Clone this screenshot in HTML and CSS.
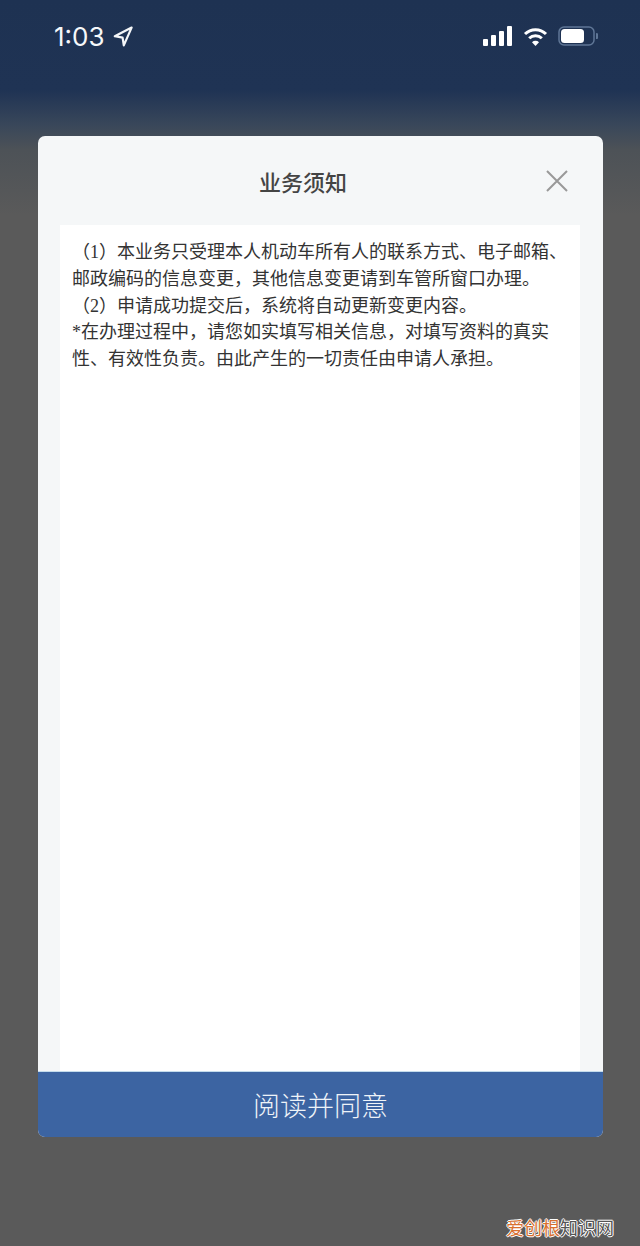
FILE: index.html
```html
<!DOCTYPE html>
<html lang="zh-CN">
<head>
    <meta charset="UTF-8">
    <meta name="viewport" content="width=device-width, initial-scale=1.0">
    <title>业务须知</title>
    <link rel="stylesheet" href="styles.css">
</head>
<body>
    <div class="status-bar">
        <div class="status-left">
            <span class="time">1:03</span>
            <svg class="location" viewBox="0 0 20 21" width="20" height="21">
                <path d="M18.6 1.6 1.8 10.2 9.6 11.6 10.8 19.4Z" fill="none" stroke="#f4f6f8" stroke-width="2.2" stroke-linejoin="round"/>
            </svg>
        </div>
        <div class="status-right">
            <svg viewBox="0 0 30 20" width="30" height="20">
                <rect x="0" y="13" width="5" height="7" rx="1" fill="#fff"/>
                <rect x="8" y="9" width="5" height="11" rx="1" fill="#fff"/>
                <rect x="16" y="5" width="5" height="15" rx="1" fill="#fff"/>
                <rect x="24" y="0" width="5" height="20" rx="1" fill="#fff"/>
            </svg>
            <svg viewBox="0 0 25 19" width="25" height="19">
                <path d="M2 7a15 15 0 0 1 21 0" fill="none" stroke="#fff" stroke-width="3"/>
                <path d="M6.2 11.2a9 9 0 0 1 12.6 0" fill="none" stroke="#fff" stroke-width="3"/>
                <path d="M12.5 19 9 15.2a5 5 0 0 1 7 0Z" fill="#fff"/>
            </svg>
            <svg viewBox="0 0 40 20" width="40" height="20">
                <rect x="1" y="1" width="35" height="18" rx="5" fill="none" stroke="#5f7696" stroke-width="1.5"/>
                <rect x="3" y="3" width="23" height="14" rx="3.5" fill="#fff"/>
                <path d="M38 7a3 3 0 0 1 0 6Z" fill="#5f7696"/>
            </svg>
        </div>
    </div>

    <div class="notice-card">
        <div class="notice-header">
            <span></span>
            <h1>业务须知</h1>
            <svg class="close-icon" viewBox="0 0 22 22" width="22" height="22">
                <path d="M1 1 21 21M21 1 1 21" stroke="#999" stroke-width="2" fill="none"/>
            </svg>
        </div>
        <div class="notice-body">
            <p>（1）本业务只受理本人机动车所有人的联系方式、电子邮箱、邮政编码的信息变更，其他信息变更请到车管所窗口办理。</p>
            <p>（2）申请成功提交后，系统将自动更新变更内容。</p>
            <p>*在办理过程中，请您如实填写相关信息，对填写资料的真实性、有效性负责。由此产生的一切责任由申请人承担。</p>
        </div>
        <button class="agree-btn">阅读并同意</button>
    </div>

    <div class="watermark">爱创根<span>知识网</span></div>
</body>
</html>
```

FILE: styles.css
```css
html, body {
    margin: 0;
    padding: 0;
}
body {
    position: relative;
    width: 640px;
    height: 1246px;
    overflow: hidden;
    font-family: "Noto Sans CJK SC", sans-serif;
    background: linear-gradient(#1e3252 0, #1f3354 90px, #39475a 125px, #4d5257 150px, #5a5a5a 215px, #5a5a5a 100%);
}
.status-bar {
    height: 72px;
    box-sizing: border-box;
    padding: 20px 42px 0 54px;
    display: flex;
    justify-content: space-between;
    align-items: flex-start;
}
.status-left {
    display: flex;
    align-items: center;
    gap: 8px;
    height: 32px;
}
.time {
    font-family: Inter, "Liberation Sans", sans-serif;
    font-size: 26px;
    color: #f6f8fa;
}
.status-right {
    display: flex;
    align-items: center;
    gap: 10px;
    height: 32px;
}
.notice-card {
    width: 565px;
    height: 1001px;
    margin: 64px 0 0 38px;
    background: #f5f7f8;
    border-radius: 7px;
    overflow: hidden;
    display: flex;
    flex-direction: column;
}
.notice-header {
    height: 89px;
    flex: none;
    display: grid;
    grid-template-columns: 1fr auto 1fr;
    align-items: center;
    padding: 0 35px 0 0;
}
.notice-header h1 {
    margin: 0;
    font-size: 22px;
    font-weight: 500;
    color: #444;
}
.close-icon {
    justify-self: end;
}
.notice-body {
    flex: 1;
    margin: 0 23px 0 22px;
    padding: 14px 12px 0;
    background: #fff;
    font-family: "Liberation Serif", "Noto Sans CJK SC", sans-serif;
    font-size: 18px;
    line-height: 26.8px;
    color: #333;
}
.notice-body p {
    margin: 0;
}
.agree-btn {
    height: 66px;
    flex: none;
    border: none;
    border-top: 1px solid #c5dcec;
    padding: 0;
    background: #3c64a2;
    color: #eef3f8;
    font-family: "Noto Sans CJK SC", sans-serif;
    font-size: 27px;
    font-weight: 300;
}
.watermark {
    position: absolute;
    left: 506px;
    top: 1215px;
    font-size: 18px;
    line-height: 24px;
    color: #d9702f;
    text-shadow: -1px 0 #fff, 1px 0 #fff, 0 -1px #fff, 0 1px #fff;
    white-space: nowrap;
}
.watermark span {
    color: #555;
}
```
